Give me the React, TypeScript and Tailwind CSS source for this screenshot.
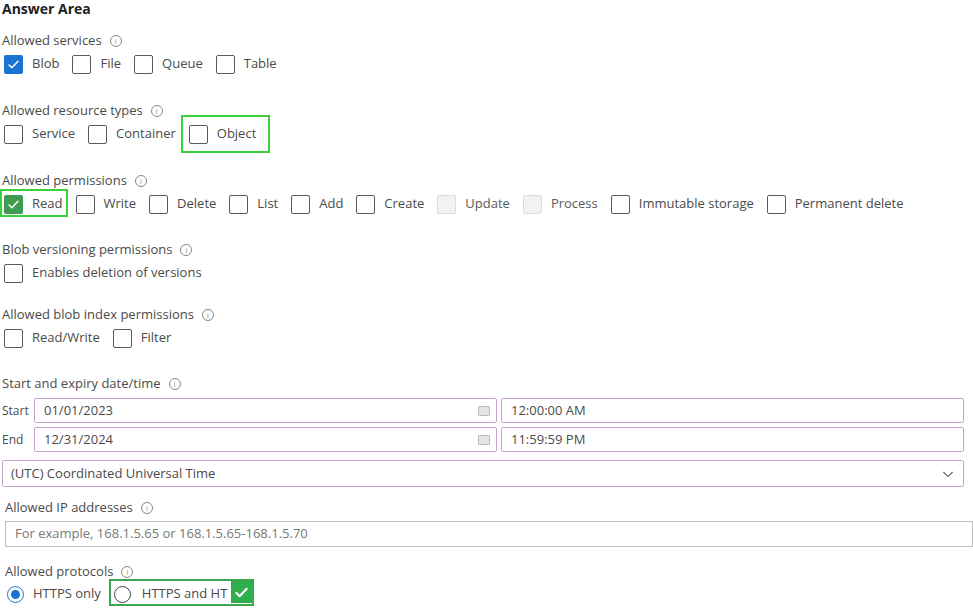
import React from 'react';

const font = { fontFamily: '"Open Sans", "Noto Sans", Arial, sans-serif' };

function Info() {
  return (
    <span className="ml-[8px] inline-flex h-[12px] w-[12px] items-center justify-center rounded-full border border-[#888] text-[7px] leading-none text-[#888]">
      i
    </span>
  );
}

function Label({ text, className = '' }: { text: string; className?: string }) {
  return (
    <div className={`flex h-[20px] items-center text-[13px] text-[#4a4a4a] ${className}`}>
      <span>{text}</span>
      <Info />
    </div>
  );
}

type BoxKind = 'empty' | 'blue' | 'green' | 'disabled';

function Box({ kind }: { kind: BoxKind }) {
  if (kind === 'blue' || kind === 'green') {
    return (
      <span
        className={`flex h-[19px] w-[19px] shrink-0 items-center justify-center rounded-[2px] ${
          kind === 'blue' ? 'bg-[#1a73d1]' : 'bg-[#3f9a52]'
        }`}
      >
        <svg width="13" height="13" viewBox="0 0 16 16" fill="none">
          <path d="M2.5 8.5l3.5 3.5 7.5-8" stroke="white" strokeWidth="1.8" strokeLinecap="round" strokeLinejoin="round" />
        </svg>
      </span>
    );
  }
  if (kind === 'disabled') {
    return <span className="h-[19px] w-[19px] shrink-0 rounded-[2px] border border-[#dcdcdc] bg-[#f2f2f2]" />;
  }
  return <span className="h-[19px] w-[19px] shrink-0 rounded-[2px] border border-[#5a5a5a] bg-white" />;
}

function Check({ text, kind = 'empty', children }: { text: string; kind?: BoxKind; children?: React.ReactNode }) {
  return (
    <div className="relative flex items-center gap-[9px]">
      <Box kind={kind} />
      <span className={`text-[13px] ${kind === 'disabled' ? 'text-[#5a5a5a]' : 'text-[#4a4a4a]'}`}>{text}</span>
      {children}
    </div>
  );
}

function Row({ children }: { children: React.ReactNode }) {
  return <div className="mt-[1px] flex h-[24px] items-center gap-[13px] pl-[2px]">{children}</div>;
}

function Calendar() {
  return <span className="h-[10px] w-[12px] rounded-[1px] border border-[#bdbdbd] bg-[#e4e4e4]" />;
}

function DateInput({ value, cal }: { value: string; cal?: boolean }) {
  return (
    <div className="flex h-[25px] flex-1 items-center justify-between rounded-[2px] border border-[#c4a5cc] pl-[9px] pr-[6px] text-[13px] text-[#4a4a4a]">
      <span>{value}</span>
      {cal && <Calendar />}
    </div>
  );
}

export default function App() {
  return (
    <div className="h-[610px] w-[973px] overflow-hidden bg-white pl-[2px]" style={font}>
      <div className="h-[17px] text-[14px] font-bold leading-[17px] text-[#222]">Answer Area</div>

      <Label text="Allowed services" className="mt-[14px]" />
      <Row>
        <Check text="Blob" kind="blue" />
        <Check text="File" />
        <Check text="Queue" />
        <Check text="Table" />
      </Row>

      <Label text="Allowed resource types" className="mt-[25px]" />
      <Row>
        <Check text="Service" />
        <Check text="Container" />
        <Check text="Object">
          <span className="pointer-events-none absolute -left-[8px] -top-[9px] h-[38px] w-[89px] border-2 border-[#3ad13a]" />
        </Check>
      </Row>

      <Label text="Allowed permissions" className="mt-[25px]" />
      <Row>
        <Check text="Read" kind="green">
          <span className="pointer-events-none absolute -left-[4px] -top-[5px] h-[28px] w-[68px] border-2 border-[#3ad13a]" />
        </Check>
        <Check text="Write" />
        <Check text="Delete" />
        <Check text="List" />
        <Check text="Add" />
        <Check text="Create" />
        <Check text="Update" kind="disabled" />
        <Check text="Process" kind="disabled" />
        <Check text="Immutable storage" />
        <Check text="Permanent delete" />
      </Row>

      <Label text="Blob versioning permissions" className="mt-[24px]" />
      <Row>
        <Check text="Enables deletion of versions" />
      </Row>

      <Label text="Allowed blob index permissions" className="mt-[20px]" />
      <Row>
        <Check text="Read/Write" />
        <Check text="Filter" />
      </Row>

      <Label text="Start and expiry date/time" className="mt-[24px]" />
      <div className="mt-[4px] flex flex-col gap-[4px] pr-[9px]">
        <div className="flex items-center gap-[4px]">
          <span className="w-[28px] text-[12px] text-[#4a4a4a]">Start</span>
          <DateInput value="01/01/2023" cal />
          <DateInput value="12:00:00 AM" />
        </div>
        <div className="flex items-center gap-[4px]">
          <span className="w-[28px] text-[12px] text-[#4a4a4a]">End</span>
          <DateInput value="12/31/2024" cal />
          <DateInput value="11:59:59 PM" />
        </div>
        <div className="mt-[4px] flex h-[27px] items-center justify-between rounded-[2px] border border-[#c4a5cc] pl-[8px] pr-[8px] text-[13px] text-[#4a4a4a]">
          <span>(UTC) Coordinated Universal Time</span>
          <svg width="14" height="14" viewBox="0 0 16 16" fill="none">
            <path d="M3 6l5 5 5-5" stroke="#666" strokeWidth="1.3" strokeLinecap="round" strokeLinejoin="round" />
          </svg>
        </div>
      </div>

      <div className="pl-[3px]">
        <Label text="Allowed IP addresses" className="mt-[11px]" />
        <div className="mt-[3px] flex h-[26px] items-center border border-[#bdbdbd] pl-[9px] text-[13px] text-[#777]">
          For example, 168.1.5.65 or 168.1.5.65-168.1.5.70
        </div>

        <Label text="Allowed protocols" className="mt-[15px]" />
        <div className="flex h-[24px] items-center">
          <div className="ml-[2px] flex items-center gap-[9px]">
            <span className="flex h-[17px] w-[17px] items-center justify-center rounded-full border border-[#1a73d1]">
              <span className="h-[9px] w-[9px] rounded-full bg-[#1a73d1]" />
            </span>
            <span className="text-[13px] text-[#4a4a4a]">HTTPS only</span>
          </div>
          <div className="relative ml-[13px] flex items-center gap-[11px]">
            <span className="h-[17px] w-[17px] rounded-full border border-[#444]" />
            <span className="text-[13px] text-[#4a4a4a]">HTTPS and HT</span>
            <span className="pointer-events-none absolute -left-[5px] -top-[5px] h-[27px] w-[145px] border-2 border-[#3fa650]" />
            <span className="absolute left-[117px] -top-[3px] flex h-[22px] w-[22px] items-center justify-center bg-[#2fae4e]">
              <svg width="15" height="15" viewBox="0 0 16 16" fill="none">
                <path d="M2.5 8.5l3.5 3.5 7.5-8" stroke="white" strokeWidth="2.2" strokeLinecap="round" strokeLinejoin="round" />
              </svg>
            </span>
          </div>
        </div>
      </div>
    </div>
  );
}
